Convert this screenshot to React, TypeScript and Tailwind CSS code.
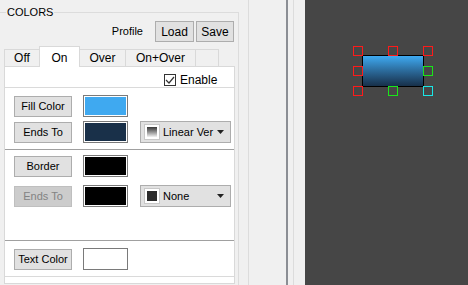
import React from 'react';

function Btn({ label, disabled = false }: { label: string; disabled?: boolean }) {
  return (
    <div
      className={
        disabled
          ? 'flex h-[21px] w-[58px] items-center justify-center border border-[#bfbfbf] bg-[#cccccc] text-[#838383]'
          : 'flex h-[21px] w-[58px] items-center justify-center border border-[#adadad] bg-[#e1e1e1] text-black'
      }
    >
      {label}
    </div>
  );
}

function Swatch({ color }: { color: string }) {
  return (
    <div className="ml-[11px] h-[22px] w-[45px] border border-[#7a7a7a] p-px">
      <div className="h-full w-full" style={{ background: color }} />
    </div>
  );
}

function Dropdown({ label, gradient }: { label: string; gradient: boolean }) {
  return (
    <div className="ml-[12px] flex h-[22px] w-[91px] items-center border border-[#adadad] bg-[#e1e1e1] pl-[3px] pr-[6px]">
      <div className="h-[16px] w-[16px] border border-[#c8c8c8] bg-white p-[2px]">
        <div
          className={
            gradient
              ? 'h-full w-full bg-gradient-to-b from-[#3a3a3a] to-[#f4f4f4]'
              : 'h-full w-full bg-[#2b2b2b]'
          }
        />
      </div>
      <span className="ml-[3px] flex-1">{label}</span>
      <svg width="7" height="4" viewBox="0 0 7 4">
        <path d="M0 0h7L3.5 4z" fill="#222" />
      </svg>
    </div>
  );
}

function Handle({ x, y, color }: { x: number; y: number; color: string }) {
  return (
    <div
      className="absolute h-[10px] w-[10px] border"
      style={{ left: x, top: y, borderColor: color }}
    />
  );
}

export default function App() {
  return (
    <div className="flex h-[285px] w-[468px] overflow-hidden bg-[#f0f0f0] font-['Liberation_Sans',Arial,sans-serif] text-[11px] text-black">
      {/* left side */}
      <div className="w-[286px] shrink-0">
        <div className="h-full w-[249px] border-r border-[#dcdcdc] pt-[12px]">
          <div className="relative ml-[-1px] h-[280px] w-[240px] border-l border-r border-t border-[#dcdcdc]">
            <span className="absolute left-[6px] top-[-8px] bg-[#f0f0f0] px-[1px] leading-[14px]">
              COLORS
            </span>

            <div className="flex items-center justify-end pr-[4px] pt-[8px]">
              <span className="mr-[12px]">Profile</span>
              <div className="flex h-[21px] w-[39px] items-center justify-center border border-[#adadad] bg-[#e1e1e1] text-[12px]">
                Load
              </div>
              <div className="ml-[2px] flex h-[21px] w-[38px] items-center justify-center border border-[#adadad] bg-[#e1e1e1] text-[12px]">
                Save
              </div>
            </div>

            <div className="mt-[4px] flex h-[20px] items-end pl-[4px] text-[12px]">
              <div className="flex h-[17px] w-[35px] items-center justify-center border-l border-t border-[#d9d9d9]">
                Off
              </div>
              <div className="relative z-10 mb-[-1px] flex h-[21px] w-[41px] items-start justify-center border-l border-r border-t border-[#d9d9d9] bg-white pt-[2px]">
                On
              </div>
              <div className="flex h-[17px] w-[46px] items-center justify-center border-r border-t border-[#d9d9d9]">
                Over
              </div>
              <div className="flex h-[17px] w-[70px] items-center justify-center border-r border-t border-[#d9d9d9]">
                On+Over
              </div>
              <div className="h-[17px] w-[23px] border-r border-t border-[#d9d9d9]" />
            </div>

            <div className="ml-[4px] h-[218px] w-[231px] border border-[#d9d9d9] bg-white">
              <div className="ml-[159px] mt-[7px] flex h-[12px] items-center text-[12px]">
                <div className="flex h-[12px] w-[12px] items-center justify-center border border-[#333]">
                  <svg width="10" height="8" viewBox="0 0 10 8">
                    <path d="M1 4l3 3 5-6" stroke="#333" strokeWidth="1.2" fill="none" />
                  </svg>
                </div>
                <span className="ml-[4px]">Enable</span>
              </div>

              <div className="mt-[1px] border-b border-t border-[#dadada] pl-[9px]">
                <div className="mt-[7px] flex h-[22px] items-center">
                  <Btn label="Fill Color" />
                  <Swatch color="#3fa9f0" />
                </div>
                <div className="mt-[4px] flex h-[22px] items-center">
                  <Btn label="Ends To" />
                  <Swatch color="#193049" />
                  <Dropdown label="Linear Ver" gradient />
                </div>
                <div className="-ml-[9px] mt-[6px] border-t border-[#a0a0a0]" />
                <div className="mt-[5px] flex h-[22px] items-center">
                  <Btn label="Border" />
                  <Swatch color="#000000" />
                </div>
                <div className="mt-[8px] flex h-[22px] items-center">
                  <Btn label="Ends To" disabled />
                  <Swatch color="#000000" />
                  <Dropdown label="None" gradient={false} />
                </div>
                <div className="-ml-[9px] mt-[33px] border-t border-[#a0a0a0]" />
                <div className="mt-[7px] flex h-[22px] items-center">
                  <Btn label="Text Color" />
                  <Swatch color="#ffffff" />
                </div>
                <div className="h-[6px]" />
              </div>
            </div>
          </div>
        </div>
      </div>

      {/* splitter */}
      <div className="w-[2px] shrink-0 bg-[#8b8e94]" />
      <div className="w-[5px] shrink-0" />
      <div className="w-px shrink-0 bg-[#dcdcdc]" />
      <div className="w-[11px] shrink-0" />

      {/* canvas */}
      <div className="relative flex-1 bg-[#464646]">
        <div className="absolute left-[57px] top-[55px] h-[32px] w-[62px] border border-black bg-gradient-to-b from-[#3eaaf2] to-[#17304a]" />
        <Handle x={48} y={46} color="#ff1a1a" />
        <Handle x={83} y={46} color="#ff1a1a" />
        <Handle x={118} y={46} color="#ff1a1a" />
        <Handle x={48} y={66} color="#ff1a1a" />
        <Handle x={118} y={66} color="#19e619" />
        <Handle x={48} y={86} color="#ff1a1a" />
        <Handle x={83} y={86} color="#19e619" />
        <Handle x={118} y={86} color="#19e6e6" />
      </div>
    </div>
  );
}
